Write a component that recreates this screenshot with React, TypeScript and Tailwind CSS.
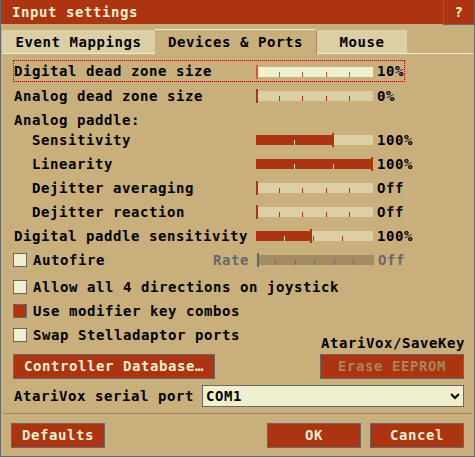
import type { ReactNode } from "react";

const font = "font-['DejaVu_Sans_Mono',monospace] font-bold text-[14px] tracking-[0.57px]";

type SliderProps = { pos: number; ticks: number[]; focused?: boolean; disabled?: boolean };

function Slider({ pos, ticks, focused, disabled }: SliderProps) {
  const track = disabled ? "bg-[#a38c61]" : focused ? "bg-[#f0f0cf]" : "bg-[#dccfa5]";
  const handle = disabled ? "bg-[#686868]" : focused ? "bg-[#d55941]" : "bg-[#ac3410]";
  const tick = disabled ? "bg-[#686868]" : focused ? "bg-[#d55941]" : "bg-[#ac3410]";
  return (
    <div className="relative w-[117px] h-[14px] shrink-0">
      <div className={`absolute left-0 right-0 top-[2px] h-[10px] ${track}`}>
        <div className="h-full bg-[#ac3410]" style={{ width: pos }} />
        {ticks.map((t) => (
          <div
            key={t}
            className={`absolute top-[5px] w-px h-[5px] ${t < pos ? "bg-[#f0f0cf]" : tick}`}
            style={{ left: t }}
          />
        ))}
      </div>
      <div className={`absolute top-0 w-[2px] h-[14px] ${handle}`} style={{ left: pos }} />
    </div>
  );
}

const five = [23, 46, 70, 93];
const three = [38, 77];

function SliderRow({ label, value, indent, ...s }: SliderProps & { label: string; value: string; indent?: boolean }) {
  return (
    <div className="h-[24px] flex items-center border-x border-transparent">
      <div className={`w-[242px] ${indent ? "pl-[18px]" : ""}`}>{label}</div>
      <Slider {...s} />
      <div className="ml-[4px]">{value}</div>
    </div>
  );
}

function Check({ checked }: { checked?: boolean }) {
  return (
    <div className={`w-[14px] h-[14px] shrink-0 border border-[#686868] ${checked ? "bg-[#ac3410]" : "bg-[#f0f0cf]"}`} />
  );
}

function CheckRow({ label, checked }: { label: string; checked?: boolean }) {
  return (
    <div className="h-[24px] flex items-center">
      <Check checked={checked} />
      <span className="ml-[6px]">{label}</span>
    </div>
  );
}

function Button({ children, className }: { children: ReactNode; className: string }) {
  return (
    <div
      className={`h-[25px] flex items-center justify-center border border-[#686868] bg-[#ac3410] ${className}`}
    >
      {children}
    </div>
  );
}

export default function App() {
  return (
    <div className={`w-[475px] h-[457px] flex flex-col bg-[#c9af7c] text-black border-x border-b border-[#686868] ${font}`}>
      {/* title */}
      <div className="flex h-[25px] shrink-0">
        <div className="flex-1 h-[24px] bg-[#ac3410] text-[#f0f0cf] flex items-center pl-[11px]">Input settings</div>
        <div className="w-[31px] h-[25px] bg-[#ac3410] border-l border-b border-[#686868] text-[#f0f0cf] flex items-center justify-center">
          ?
        </div>
      </div>

      {/* tabs */}
      <div className="mt-[4px] h-[25px] flex items-end pl-[1px] shrink-0">
        <div className="w-[153px] h-[24px] bg-[#dccfa5] border-b border-[#f0f0cf] flex items-center justify-center pt-[1px]">
          Event Mappings
        </div>
        <div className="w-[162px] h-[25px] border-t border-r border-t-[#f0f0cf] border-r-[#a38c61] flex items-center justify-center">
          Devices &amp; Ports
        </div>
        <div className="w-[90px] h-[24px] bg-[#dccfa5] border-b border-[#f0f0cf] flex items-center justify-center pt-[1px]">
          Mouse
        </div>
        <div className="flex-1 h-px bg-[#f0f0cf] mr-[1px]" />
      </div>

      {/* content */}
      <div className="pl-[12px] pt-[6px] flex flex-col">
        <div className="w-[392px] h-[22px] mb-[2px] pt-[1px] flex items-center border border-dotted border-[#c80000]">
          <div className="w-[242px]">Digital dead zone size</div>
          <Slider pos={0} ticks={five} focused />
          <div className="ml-[4px]">10%</div>
        </div>
        <SliderRow label="Analog dead zone size" value="0%" pos={0} ticks={five} />
        <div className="h-[20px] pt-[4px] leading-[16px] pl-[1px]">Analog paddle:</div>
        <SliderRow label="Sensitivity" value="100%" indent pos={76} ticks={three} />
        <SliderRow label="Linearity" value="100%" indent pos={115} ticks={three} />
        <SliderRow label="Dejitter averaging" value="Off" indent pos={0} ticks={five} />
        <SliderRow label="Dejitter reaction" value="Off" indent pos={0} ticks={five} />
        <SliderRow label="Digital paddle sensitivity" value="100%" pos={54} ticks={[28, 57, 86]} />

        <div className="h-[24px] flex items-center">
          <div className="w-[244px] flex items-center">
            <Check />
            <span className="ml-[6px] flex-1">Autofire</span>
            <span className="text-[#686868] mr-[8px]">Rate</span>
          </div>
          <Slider pos={0} ticks={[18, 38, 57, 77, 96]} disabled />
          <div className="ml-[4px] text-[#686868]">Off</div>
        </div>

        <div className="mt-[3px]">
          <CheckRow label="Allow all 4 directions on joystick" />
        </div>

        <div className="flex items-end">
          <div className="flex flex-col w-[307px]">
            <CheckRow label="Use modifier key combos" checked />
            <CheckRow label="Swap Stelladaptor ports" />
            <Button className="mt-[7px] w-[202px] text-[#f0f0cf]">Controller Database…</Button>
          </div>
          <div className="flex flex-col w-[144px]">
            <div className="pl-[1px] h-[16px] leading-[16px]">AtariVox/SaveKey</div>
            <Button className="mt-[3px] w-[144px] text-[#a8875c]">Erase EEPROM</Button>
          </div>
        </div>

        <div className="mt-[6px] h-[22px] flex items-center">
          <div className="w-[189px] pl-[1px]">AtariVox serial port</div>
          <div className="w-[262px] h-[22px] bg-[#f0f0cf] border border-[#686868] flex items-center pl-[3px] pr-[3px]">
            <span className="flex-1">COM1</span>
            <svg width="10" height="7" viewBox="0 0 10 7">
              <path d="M1 1 L5 5 L9 1" fill="none" stroke="#000" strokeWidth="2" />
            </svg>
          </div>
        </div>
      </div>

      <div className="mt-[6px] mx-[2px] h-px bg-[#9a8560]" />

      <div className="mt-[9px] flex px-[10px]">
        <Button className="w-[94px] text-[#f0f0cf]">Defaults</Button>
        <div className="flex-1" />
        <Button className="w-[94px] text-[#f0f0cf]">OK</Button>
        <Button className="ml-[9px] w-[94px] text-[#f0f0cf]">Cancel</Button>
      </div>
    </div>
  );
}
